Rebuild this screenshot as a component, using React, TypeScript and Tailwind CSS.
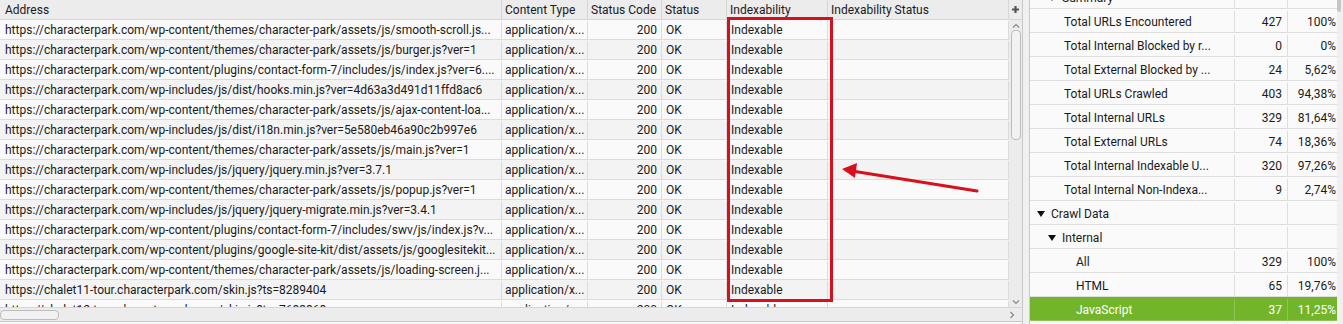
import React from "react";

const rows: string[] = [
  "https://characterpark.com/wp-content/themes/character-park/assets/js/smooth-scroll.js...",
  "https://characterpark.com/wp-content/themes/character-park/assets/js/burger.js?ver=1",
  "https://characterpark.com/wp-content/plugins/contact-form-7/includes/js/index.js?ver=6....",
  "https://characterpark.com/wp-includes/js/dist/hooks.min.js?ver=4d63a3d491d11ffd8ac6",
  "https://characterpark.com/wp-content/themes/character-park/assets/js/ajax-content-loa...",
  "https://characterpark.com/wp-includes/js/dist/i18n.min.js?ver=5e580eb46a90c2b997e6",
  "https://characterpark.com/wp-content/themes/character-park/assets/js/main.js?ver=1",
  "https://characterpark.com/wp-includes/js/jquery/jquery.min.js?ver=3.7.1",
  "https://characterpark.com/wp-content/themes/character-park/assets/js/popup.js?ver=1",
  "https://characterpark.com/wp-includes/js/jquery/jquery-migrate.min.js?ver=3.4.1",
  "https://characterpark.com/wp-content/plugins/contact-form-7/includes/swv/js/index.js?v...",
  "https://characterpark.com/wp-content/plugins/google-site-kit/dist/assets/js/googlesitekit...",
  "https://characterpark.com/wp-content/themes/character-park/assets/js/loading-screen.j...",
  "https://chalet11-tour.characterpark.com/skin.js?ts=8289404",
  "https://chalet12-tour.characterpark.com/skin.js?ts=7683868",
];

type R = { label: string; n?: string; p?: string; indent: number; tri?: boolean; sel?: boolean };
const side: R[] = [
  { label: "Summary", indent: 1, tri: true },
  { label: "Total URLs Encountered", n: "427", p: "100%", indent: 2 },
  { label: "Total Internal Blocked by r...", n: "0", p: "0%", indent: 2 },
  { label: "Total External Blocked by ...", n: "24", p: "5,62%", indent: 2 },
  { label: "Total URLs Crawled", n: "403", p: "94,38%", indent: 2 },
  { label: "Total Internal URLs", n: "329", p: "81,64%", indent: 2 },
  { label: "Total External URLs", n: "74", p: "18,36%", indent: 2 },
  { label: "Total Internal Indexable U...", n: "320", p: "97,26%", indent: 2 },
  { label: "Total Internal Non-Indexa...", n: "9", p: "2,74%", indent: 2 },
  { label: "Crawl Data", indent: 0, tri: true },
  { label: "Internal", indent: 1, tri: true },
  { label: "All", n: "329", p: "100%", indent: 3 },
  { label: "HTML", n: "65", p: "19,76%", indent: 3 },
  { label: "JavaScript", n: "37", p: "11,25%", indent: 3, sel: true },
  { label: "", indent: 0 },
];

const cols = "grid grid-cols-[502px_86px_74px_65px_101px_181px]";

export default function App() {
  return (
    <div
      className="flex h-[324px] w-[1343px] overflow-hidden bg-[#f0f0f0] text-[12px] text-[#1a1a1a]"
      style={{ fontFamily: "Roboto, 'Liberation Sans', sans-serif" }}
    >
      {/* Left pane */}
      <div className="relative flex w-[1023px] flex-col border-r border-[#c8c8c8] bg-[#f9f9f9]">
        <div className="flex h-[307px] overflow-hidden">
          <div className="flex w-[1009px] flex-col">
            <div className={`${cols} h-[20px] shrink-0 border-b border-[#d6d6d6] bg-[#ececec]`}>
              {["Address", "Content Type", "Status Code", "Status", "Indexability", "Indexability Status"].map((h, i) => (
                <div key={h} className={`flex items-center border-r border-[#d6d6d6] pt-[1px] ${i === 0 ? "pl-[5px]" : "pl-[3px]"} leading-none whitespace-nowrap`}>
                  {h}
                </div>
              ))}
            </div>
            {rows.map((u, i) => (
              <div
                key={i}
                className={`${cols} h-[20px] shrink-0 border-b border-[#dcdcdc] pt-[1px] ${i % 2 === 0 ? "bg-[#fafafa]" : "bg-[#f3f3f3]"}`}
              >
                <div className="flex items-center overflow-hidden whitespace-nowrap border-r border-[#dcdcdc] pl-[5px]">{u}</div>
                <div className="flex items-center overflow-hidden whitespace-nowrap border-r border-[#dcdcdc] pl-[3px]">application/x...</div>
                <div className="flex items-center justify-end border-r border-[#dcdcdc] pr-[4px]">200</div>
                <div className="flex items-center border-r border-[#dcdcdc] pl-[4px]">OK</div>
                <div className="flex items-center border-r border-[#dcdcdc] pl-[4px]">Indexable</div>
                <div className="border-r border-[#dcdcdc]"></div>
              </div>
            ))}
          </div>
          {/* vertical scrollbar */}
          <div className="flex w-[14px] flex-col bg-[#ececec]">
            <div className="flex h-[20px] items-center justify-center border-b border-[#d6d6d6] bg-[#ececec]">
              <svg width="9" height="9" viewBox="0 0 9 9">
                <path d="M4.5 1v7M1 4.5h7" stroke="#555" strokeWidth="2.2" />
              </svg>
            </div>
            <div className="flex h-[10px] items-center justify-center">
              <svg width="8" height="5" viewBox="0 0 8 5">
                <path d="M1 4.5L4 1.5L7 4.5" stroke="#888" strokeWidth="1.2" fill="none" />
              </svg>
            </div>
            <div className="mx-auto h-[110px] w-[10px] rounded-[4px] border border-[#bdbdbd] bg-[#f2f2f2]"></div>
            <div className="flex-1"></div>
            <div className="flex h-[10px] items-center justify-center">
              <svg width="8" height="5" viewBox="0 0 8 5">
                <path d="M1 0.5L4 3.5L7 0.5" stroke="#888" strokeWidth="1.2" fill="none" />
              </svg>
            </div>
          </div>
        </div>
        {/* horizontal scrollbar */}
        <div className="flex h-[14px] items-center border-t border-[#d6d6d6] bg-[#ececec]">
          <div className="h-[10px] w-[59px] rounded-[4px] border border-[#bdbdbd] bg-[#f2f2f2]"></div>
          <div className="flex-1"></div>
          <div className="flex w-[20px] items-center justify-center">
            <svg width="5" height="8" viewBox="0 0 5 8">
              <path d="M0.5 1L3.5 4L0.5 7" stroke="#888" strokeWidth="1.2" fill="none" />
            </svg>
          </div>
        </div>
        <div className="flex-1 border-t border-[#c8c8c8] bg-[#f7f7f7]"></div>

        {/* red highlight box */}
        <div className="pointer-events-none absolute left-[727px] top-[17px] h-[285px] w-[106px] border-[3px] border-[#d7101c]"></div>
        {/* arrow */}
        <svg className="pointer-events-none absolute left-[835px] top-[160px]" width="150" height="40" viewBox="835 160 150 40">
          <path d="M977 191 L852 171" stroke="#d7101c" strokeWidth="3" strokeLinecap="round" />
          <path d="M842 169 L857 163 L855 178 Z" fill="#d7101c" />
        </svg>
      </div>

      {/* gap */}
      <div className="w-[6px] bg-[#f0f0f0]"></div>

      {/* Right pane */}
      <div className="flex flex-1 overflow-hidden border-l border-[#c8c8c8] bg-[#fafafa]">
        <div className="w-[308px] overflow-hidden">
          <div className="-mt-[15px] flex flex-col">
            {side.map((r, i) => (
              <div
                key={i}
                className={`grid h-[24px] grid-cols-[205px_53px_50px] border-b pt-[2px] ${r.sel ? "border-[#8cc45a] bg-[#72b52b] text-white" : "border-[#dedede] bg-[#fafafa]"}`}
              >
                <div
                  className={`flex items-center whitespace-nowrap border-r ${r.sel ? "border-[#8cc45a]" : "border-[#dedede]"} ${
                    r.indent === 0 ? "pl-[7px]" : r.indent === 1 ? "pl-[18px]" : r.indent === 2 ? "pl-[34px]" : "pl-[46px]"
                  }`}
                >
                  {r.tri && (
                    <svg className="mr-[6px]" width="8" height="6" viewBox="0 0 8 6">
                      <path d="M0 0H8L4 6Z" fill="#111" />
                    </svg>
                  )}
                  <span>{r.label}</span>
                </div>
                <div className={`flex items-center justify-end border-r pr-[5px] ${r.sel ? "border-[#8cc45a]" : "border-[#dedede]"}`}>
                  {r.n}
                </div>
                <div className="flex items-center justify-end pr-[2px]">{r.p}</div>
              </div>
            ))}
          </div>
        </div>
        {/* right scrollbar */}
        <div className="flex w-[6px] flex-col bg-[#f0f0f0]">
          <div className="h-[12px] w-[4px] rounded-b-[2px] bg-[#c6c6c6]"></div>
        </div>
      </div>
    </div>
  );
}
